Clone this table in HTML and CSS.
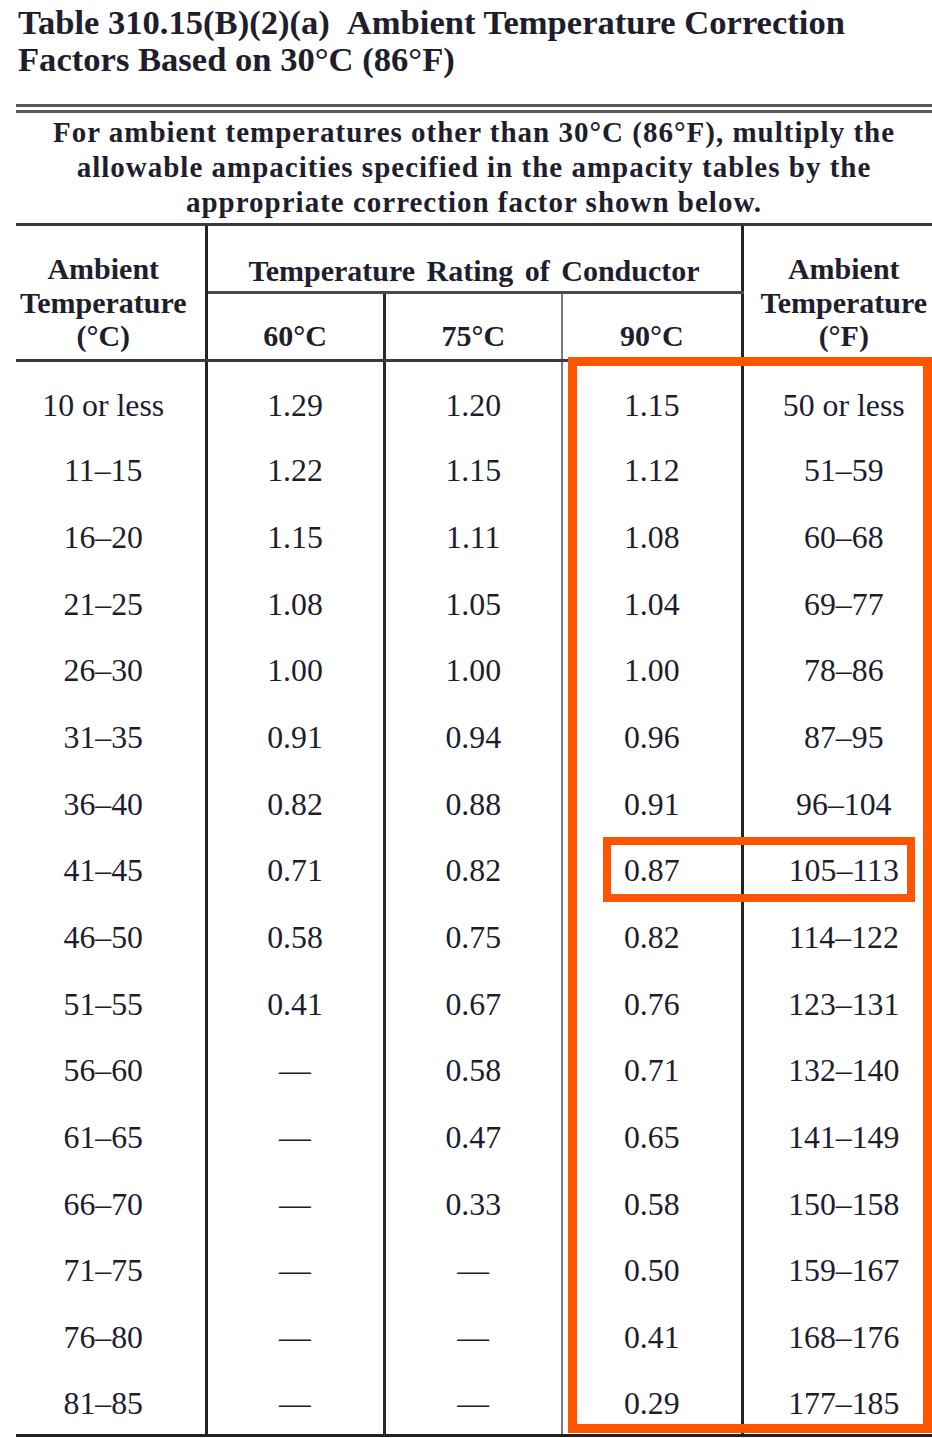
FILE: index.html
```html
<!DOCTYPE html>
<html lang="en">
<head>
<meta charset="utf-8">
<title>Table 310.15(B)(2)(a) Ambient Temperature Correction Factors</title>
<link rel="stylesheet" href="styles.css">
</head>
<body>
<div class="page">
  <h1 class="title">Table 310.15(B)(2)(a)<span class="title-gap"></span>Ambient Temperature Correction<br>Factors Based on 30°C (86°F)</h1>
  <div class="table-wrap">
    <div class="double-rule"></div>
    <p class="note">For ambient temperatures other than 30°C (86°F), multiply the<br>allowable ampacities specified in the ampacity tables by the<br>appropriate correction factor shown below.</p>
    <table class="factors">
      <colgroup>
        <col class="c1"><col class="c2"><col class="c3"><col class="c4"><col class="c5">
      </colgroup>
      <thead>
        <tr class="head-top">
          <th rowspan="2" class="col-c">Ambient<br>Temperature<br>(°C)</th>
          <th colspan="3" class="rating">Temperature Rating of Conductor</th>
          <th rowspan="2" class="col-f">Ambient<br>Temperature<br>(°F)</th>
        </tr>
        <tr class="head-sub">
          <th class="t60">60°C</th>
          <th class="t75">75°C</th>
          <th class="t90">90°C</th>
        </tr>
      </thead>
      <tbody>
        <tr class="first"><td class="col-c">10 or less</td><td class="t60">1.29</td><td class="t75">1.20</td><td class="t90">1.15</td><td class="col-f">50 or less</td></tr>
        <tr><td class="col-c">11–15</td><td class="t60">1.22</td><td class="t75">1.15</td><td class="t90">1.12</td><td class="col-f">51–59</td></tr>
        <tr><td class="col-c">16–20</td><td class="t60">1.15</td><td class="t75">1.11</td><td class="t90">1.08</td><td class="col-f">60–68</td></tr>
        <tr><td class="col-c">21–25</td><td class="t60">1.08</td><td class="t75">1.05</td><td class="t90">1.04</td><td class="col-f">69–77</td></tr>
        <tr><td class="col-c">26–30</td><td class="t60">1.00</td><td class="t75">1.00</td><td class="t90">1.00</td><td class="col-f">78–86</td></tr>
        <tr><td class="col-c">31–35</td><td class="t60">0.91</td><td class="t75">0.94</td><td class="t90">0.96</td><td class="col-f">87–95</td></tr>
        <tr><td class="col-c">36–40</td><td class="t60">0.82</td><td class="t75">0.88</td><td class="t90">0.91</td><td class="col-f">96–104</td></tr>
        <tr><td class="col-c">41–45</td><td class="t60">0.71</td><td class="t75">0.82</td><td class="t90">0.87</td><td class="col-f">105–113</td></tr>
        <tr><td class="col-c">46–50</td><td class="t60">0.58</td><td class="t75">0.75</td><td class="t90">0.82</td><td class="col-f">114–122</td></tr>
        <tr><td class="col-c">51–55</td><td class="t60">0.41</td><td class="t75">0.67</td><td class="t90">0.76</td><td class="col-f">123–131</td></tr>
        <tr><td class="col-c">56–60</td><td class="t60">—</td><td class="t75">0.58</td><td class="t90">0.71</td><td class="col-f">132–140</td></tr>
        <tr><td class="col-c">61–65</td><td class="t60">—</td><td class="t75">0.47</td><td class="t90">0.65</td><td class="col-f">141–149</td></tr>
        <tr><td class="col-c">66–70</td><td class="t60">—</td><td class="t75">0.33</td><td class="t90">0.58</td><td class="col-f">150–158</td></tr>
        <tr><td class="col-c">71–75</td><td class="t60">—</td><td class="t75">—</td><td class="t90">0.50</td><td class="col-f">159–167</td></tr>
        <tr><td class="col-c">76–80</td><td class="t60">—</td><td class="t75">—</td><td class="t90">0.41</td><td class="col-f">168–176</td></tr>
        <tr><td class="col-c">81–85</td><td class="t60">—</td><td class="t75">—</td><td class="t90">0.29</td><td class="col-f">177–185</td></tr>
      </tbody>
    </table>
  </div>
  <div class="highlight highlight-col"></div>
  <div class="highlight highlight-row"></div>
</div>
</body>
</html>
```

FILE: styles.css
```css
html, body {
  margin: 0;
  padding: 0;
  background: #ffffff;
}

body {
  font-family: "Liberation Serif", "Times New Roman", serif;
  color: #1d1d2c;
}

.page {
  position: relative;
  width: 932px;
  height: 1438px;
  overflow: hidden;
}

.title {
  margin: 0;
  padding: 4px 0 0 18px;
  font-size: 34.6px;
  line-height: 37px;
  font-weight: bold;
  color: #1e1e2e;
}

.title-gap {
  display: inline-block;
  width: 17px;
}

.table-wrap {
  margin-left: 16px;
  width: 916px;
}

.double-rule {
  margin-top: 26px;
  height: 3px;
  border-top: 3px solid #5a5a5a;
  border-bottom: 3px solid #5a5a5a;
}

.note {
  margin: 0;
  padding: 2px 0 3px;
  text-align: center;
  font-size: 29px;
  line-height: 35px;
  letter-spacing: 1px;
  font-weight: bold;
  color: #1e1e2e;
  border-bottom: 3px solid #3a3a3a;
}

.factors {
  width: 916px;
  table-layout: fixed;
  border-collapse: collapse;
  border-bottom: 3px solid #222222;
}

.c1 { width: 190px; }
.c2 { width: 178px; }
.c3 { width: 178px; }
.c4 { width: 180px; }
.c5 { width: 190px; }

.factors th {
  font-weight: bold;
  font-size: 30px;
  line-height: 33.5px;
  color: #1e1e2e;
  vertical-align: bottom;
  padding: 0 0 6px;
}

.factors th.rating {
  padding-bottom: 3px;
  word-spacing: 4px;
  border-bottom: 3px solid #4a4a4a;
}

.head-top {
  height: 66px;
}

.head-sub {
  height: 68px;
}

.factors thead tr.head-sub th,
.factors th.col-c,
.factors th.col-f {
  border-bottom: 3px solid #3a3a3a;
}

.factors th.col-f {
  border-left: 3px solid #232323;
}

.factors tbody tr {
  height: 66.67px;
}

.factors tbody tr.first {
  height: 76px;
}

.factors td {
  padding: 4px 0 0;
  text-align: center;
  vertical-align: middle;
  font-size: 31.8px;
  color: #1d1d30;
}

.factors tr.first td {
  padding-top: 14px;
}

.col-c {
  padding-right: 14px !important;
  border-right: 3px solid #232323;
}

.t60 {
  border-right: 3px solid #2a2a2a;
}

.t75 {
  border-right: 2px solid #7a7a7a;
}

.t90 {
  border-right: 3px solid #232323;
}

.col-f {
  padding-left: 12px !important;
}

.highlight {
  position: absolute;
  box-sizing: border-box;
  border: 9px solid #ff5400;
  pointer-events: none;
}

.highlight-col {
  left: 568px;
  top: 357px;
  width: 364px;
  height: 1076px;
}

.highlight-row {
  left: 603px;
  top: 837px;
  width: 312px;
  height: 65px;
  border-width: 8px;
}
```
